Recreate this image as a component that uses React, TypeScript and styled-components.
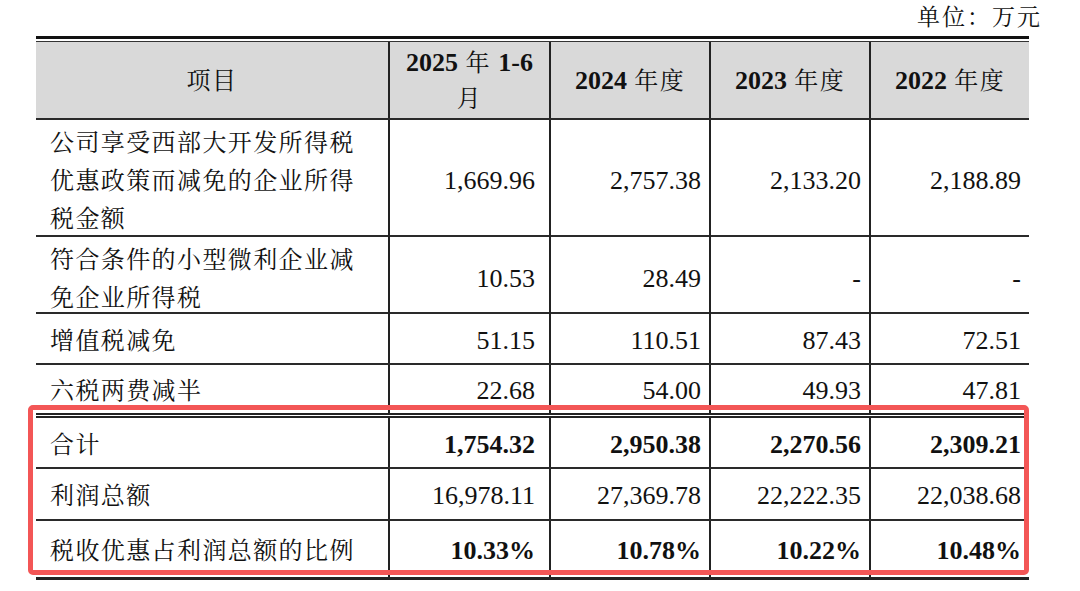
import React from "react";
import styled, { createGlobalStyle } from "styled-components";

const Global = createGlobalStyle`
  html, body { margin: 0; padding: 0; background: #ffffff; }
  body {
    font-family: "Liberation Serif", "Noto Serif CJK SC", "Noto Sans CJK SC", serif;
    color: #111111;
  }
`;

const COLS = "352px 161px 160px 160px 160px";

const Page = styled.div`
  width: 1080px;
  height: 591px;
  overflow: hidden;
  box-sizing: border-box;
  padding-left: 36px;
`;

const Unit = styled.div`
  width: 1006px;
  height: 36px;
  text-align: right;
  font-size: 23px;
  line-height: 35px;
  letter-spacing: 2px;
`;

const TableArea = styled.div`
  position: relative;
  width: 993px;
`;

const Table = styled.div`
  border-top: 3px solid #111;
  border-bottom: 3px solid #222;
  padding-top: 2px;
`;

type Line = "single" | "double" | "none";

const Row = styled.div<{ $h: number; $head?: boolean; $line: Line }>`
  display: grid;
  grid-template-columns: ${COLS};
  height: ${(p) => p.$h}px;
  background: ${(p) => (p.$head ? "#d9d9d9" : "transparent")};
  border-top: ${(p) => (p.$head ? "1px solid #333" : "none")};
  border-bottom: ${(p) =>
    p.$line === "double" ? "5px double #222" : p.$line === "single" ? "2px solid #2a2a2a" : "none"};
`;

const Cell = styled.div<{ $kind: "label" | "num" | "head"; $first?: boolean; $pr?: number; $bold?: boolean }>`
  display: flex;
  align-items: center;
  min-width: 0;
  box-sizing: border-box;
  border-left: ${(p) => (p.$first ? "none" : "2px solid #222")};
  justify-content: ${(p) => (p.$kind === "num" ? "flex-end" : p.$kind === "head" ? "center" : "flex-start")};
  text-align: ${(p) => (p.$kind === "head" ? "center" : "left")};
  padding: ${(p) =>
    p.$kind === "label" ? "4px 20px 0 14px" : p.$kind === "num" ? `4px ${p.$pr ?? 8}px 0 6px` : "2px 6px 0 6px"};
  font-size: ${(p) => (p.$kind === "num" ? "26px" : "24px")};
  line-height: ${(p) => (p.$kind === "head" ? "36px" : "38px")};
  letter-spacing: ${(p) => (p.$kind === "num" ? "0" : "1.4px")};
  font-weight: ${(p) => (p.$bold ? 700 : 400)};
  white-space: ${(p) => (p.$kind === "num" ? "nowrap" : "normal")};
`;

const HeadNum = styled.b`
  font-size: 26px;
  font-weight: 700;
  letter-spacing: 0;
`;

const Highlight = styled.div`
  position: absolute;
  left: -8px;
  top: 369px;
  width: 1001px;
  height: 170px;
  box-sizing: border-box;
  border: 5px solid #f35656;
  border-radius: 5px;
  pointer-events: none;
`;

type DataRow = { label: string; values: string[]; h: number; line: Line; bold?: boolean };

const rows: DataRow[] = [
  { label: "公司享受西部大开发所得税优惠政策而减免的企业所得税金额", values: ["1,669.96", "2,757.38", "2,133.20", "2,188.89"], h: 115, line: "single" },
  { label: "符合条件的小型微利企业减免企业所得税", values: ["10.53", "28.49", "-", "-"], h: 75, line: "single" },
  { label: "增值税减免", values: ["51.15", "110.51", "87.43", "72.51"], h: 49, line: "single" },
  { label: "六税两费减半", values: ["22.68", "54.00", "49.93", "47.81"], h: 48, line: "double" },
  { label: "合计", values: ["1,754.32", "2,950.38", "2,270.56", "2,309.21"], h: 49, line: "single", bold: true },
  { label: "利润总额", values: ["16,978.11", "27,369.78", "22,222.35", "22,038.68"], h: 50, line: "single" },
  { label: "税收优惠占利润总额的比例", values: ["10.33%", "10.78%", "10.22%", "10.48%"], h: 56, line: "none", bold: true },
];

const years = ["2024", "2023", "2022"];

export default function App() {
  return (
    <>
      <Global />
      <Page>
        <Unit>单位：万元</Unit>
        <TableArea>
          <Table>
            <Row $h={76} $head $line="single">
              <Cell $kind="head" $first>项目</Cell>
              <Cell $kind="head">
                <span>
                  <HeadNum>2025</HeadNum> 年 <HeadNum>1-6</HeadNum>
                  <br />月
                </span>
              </Cell>
              {years.map((y) => (
                <Cell key={y} $kind="head">
                  <span>
                    <HeadNum>{y}</HeadNum> 年度
                  </span>
                </Cell>
              ))}
            </Row>
            {rows.map((r) => (
              <Row key={r.label} $h={r.h} $line={r.line}>
                <Cell $kind="label" $first>{r.label}</Cell>
                {r.values.map((v, i) => (
                  <Cell key={i} $kind="num" $pr={i === 0 ? 14 : 8} $bold={r.bold}>
                    {v}
                  </Cell>
                ))}
              </Row>
            ))}
          </Table>
          <Highlight />
        </TableArea>
      </Page>
    </>
  );
}
